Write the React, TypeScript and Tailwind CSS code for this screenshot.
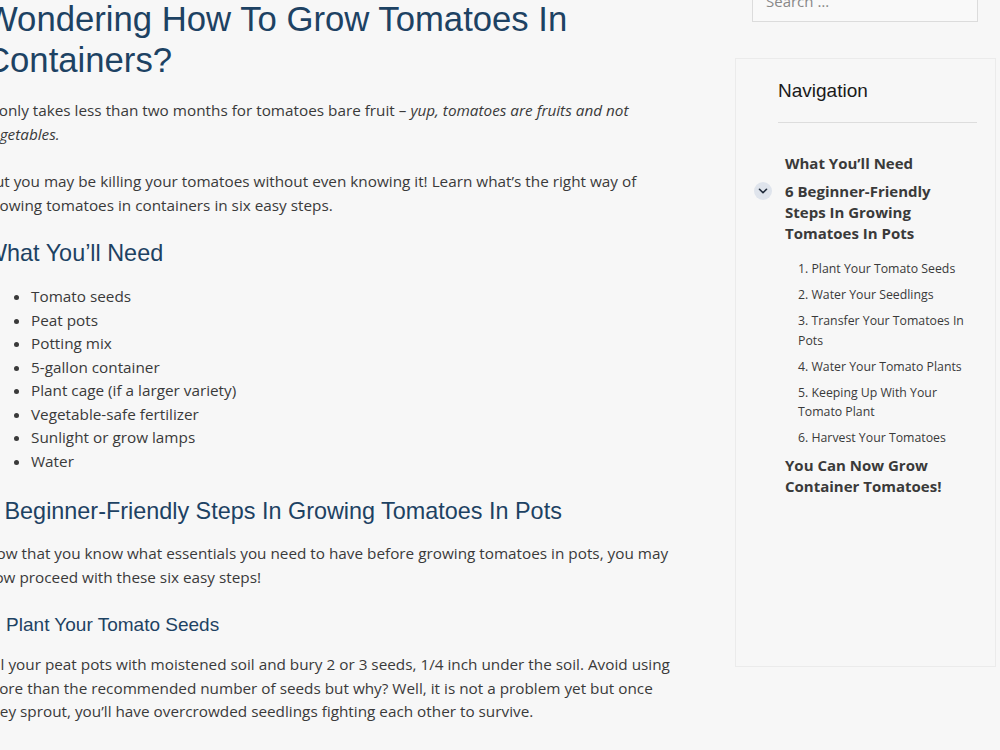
import React from "react";

const body = { fontFamily: "'Open Sans', 'Noto Sans', sans-serif" };
const head = { fontFamily: "'Liberation Sans', Arial, sans-serif" };

const needs = [
  "Tomato seeds",
  "Peat pots",
  "Potting mix",
  "5-gallon container",
  "Plant cage (if a larger variety)",
  "Vegetable-safe fertilizer",
  "Sunlight or grow lamps",
  "Water",
];

const steps = [
  "1. Plant Your Tomato Seeds",
  "2. Water Your Seedlings",
  "3. Transfer Your Tomatoes In Pots",
  "4. Water Your Tomato Plants",
  "5. Keeping Up With Your Tomato Plant",
  "6. Harvest Your Tomatoes",
];

function Article() {
  return (
    <article className="ml-[-15px] w-[690px] shrink-0 text-[#3a3a3a] text-[15.3px] leading-[23.5px]" style={body}>
      <h1 className="text-[34.7px] leading-[41px] text-[#1d4263] mt-[-1px]" style={head}>
        Wondering How To Grow Tomatoes In Containers?
      </h1>
      <p className="mt-[18px]">
        It only takes less than two months for tomatoes bare fruit – <em>yup, tomatoes are fruits and not vegetables.</em>
      </p>
      <p className="mt-[24px]">
        But you may be killing your tomatoes without even knowing it! Learn what’s the right way of growing tomatoes in containers in six easy steps.
      </p>
      <h2 className="mt-[21px] text-[23.4px] leading-[30px] text-[#1d4263]" style={head}>
        What You’ll Need
      </h2>
      <ul className="mt-[17px] list-disc pl-[46px]">
        {needs.map((n) => (
          <li key={n}>{n}</li>
        ))}
      </ul>
      <h2 className="mt-[23px] text-[23.4px] leading-[30px] text-[#1d4263]" style={head}>
        6 Beginner-Friendly Steps In Growing Tomatoes In Pots
      </h2>
      <p className="mt-[16px]">
        Now that you know what essentials you need to have before growing tomatoes in pots, you may now proceed with these six easy steps!
      </p>
      <h3 className="mt-[23px] text-[19px] leading-[26px] text-[#1d4263]" style={head}>
        1. Plant Your Tomato Seeds
      </h3>
      <p className="mt-[15px]">
        Fill your peat pots with moistened soil and bury 2 or 3 seeds, 1/4 inch under the soil. Avoid using more than the recommended number of seeds but why? Well, it is not a problem yet but once they sprout, you’ll have overcrowded seedlings fighting each other to survive.
      </p>
    </article>
  );
}

function Sidebar() {
  return (
    <aside className="ml-[60px] w-[261px] shrink-0 mt-[-20px]" style={body}>
      <div className="ml-[17px] w-[226px] h-[42px] border border-[#dcdcdc] bg-[#f9f9f9] px-[13px] flex items-center text-[15px] text-[#888]">
        Search …
      </div>
      <nav className="mt-[36px] h-[609px] border border-[#ebebeb] bg-[#f7f7f7] pl-[42px] pr-[18px] pt-[20px]">
        <h2 className="text-[19px] leading-[24px] text-[#1a1a1a]" style={head}>
          Navigation
        </h2>
        <div className="mt-[19px] border-t border-[#dddddd]" />
        <ul className="mt-[30px] ml-[7px] w-[182px] text-[#3a3a3a]">
          <li className="text-[15px] leading-[21px] font-bold">What You’ll Need</li>
          <li className="relative mt-[7px] text-[15px] leading-[21px] font-bold">
            <span className="absolute left-[-31px] top-[1px] w-[18px] h-[18px] rounded-full bg-[#dfe4ec] flex items-center justify-center">
              <svg width="14" height="14" viewBox="0 0 24 24" fill="none" stroke="#1f2a3a" strokeWidth="2.8" strokeLinecap="round" strokeLinejoin="round">
                <path d="M6 9l6 6 6-6" />
              </svg>
            </span>
            6 Beginner-Friendly Steps In Growing Tomatoes In Pots
          </li>
          <li>
            <ul className="mt-[15px] pl-[13px] text-[12.3px] leading-[19.5px] font-normal flex flex-col gap-[6.5px]">
              {steps.map((s) => (
                <li key={s}>{s}</li>
              ))}
            </ul>
          </li>
          <li className="mt-[7px] text-[15px] leading-[21px] font-bold">You Can Now Grow Container Tomatoes!</li>
        </ul>
      </nav>
    </aside>
  );
}

export default function App() {
  return (
    <div className="w-[1000px] h-[750px] overflow-hidden bg-[#f7f7f7] flex items-start">
      <Article />
      <Sidebar />
    </div>
  );
}
